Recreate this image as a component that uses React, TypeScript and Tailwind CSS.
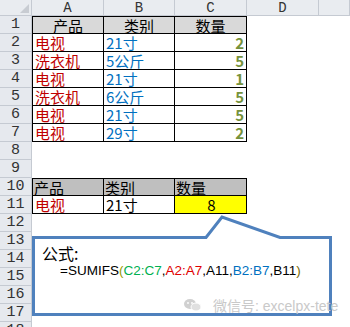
import React from "react";

type Cell = { t: string; cls?: string };

const cjk = "font-['Noto_Sans_CJK_SC',sans-serif]";
const red = "text-[#c00000]";
const blue = "text-[#0070c0]";
const green = "text-[#76923c] font-bold justify-end pr-[2px]";

const rows: Record<number, Cell[]> = {
  2: [{ t: "电视", cls: red }, { t: "21寸", cls: blue }, { t: "2", cls: green }],
  3: [{ t: "洗衣机", cls: red }, { t: "5公斤", cls: blue }, { t: "5", cls: green }],
  4: [{ t: "电视", cls: red }, { t: "21寸", cls: blue }, { t: "1", cls: green }],
  5: [{ t: "洗衣机", cls: red }, { t: "6公斤", cls: blue }, { t: "5", cls: green }],
  6: [{ t: "电视", cls: red }, { t: "21寸", cls: blue }, { t: "5", cls: green }],
  7: [{ t: "电视", cls: red }, { t: "29寸", cls: blue }, { t: "2", cls: green }],
  11: [
    { t: "电视", cls: red },
    { t: "21寸", cls: "text-black" },
    { t: "8", cls: "text-black bg-[#ffff00] justify-center" },
  ],
};

export default function App() {
  const cells: React.ReactNode[] = [];
  cells.push(
    <div key="corner" className="relative bg-[#e9ecf0] border-r border-b border-[#c5cad2]">
      <div className="absolute right-[2px] bottom-[2px] w-0 h-0 border-l-[9px] border-l-transparent border-b-[9px] border-b-[#c8ccd2]" />
    </div>
  );
  ["A", "B", "C", "D", ""].forEach((l, i) => {
    cells.push(
      <div
        key={"h" + i}
        className="bg-[#e9ecf0] border-r border-b border-[#c5cad2] flex items-center justify-center text-[14px] leading-none text-[#333] font-['Liberation_Mono',monospace]"
      >
        {l}
      </div>
    );
  });
  for (let r = 1; r <= 18; r++) {
    cells.push(
      <div
        key={"r" + r}
        className="bg-[#e6e9ee] border-r border-b border-[#c5cad2] flex items-center justify-center text-[15px] leading-none text-[#333] font-['Liberation_Mono',monospace]"
      >
        {r}
      </div>
    );
    for (let c = 0; c < 5; c++) {
      let content: React.ReactNode = null;
      let cls = "";
      const inT1 = r >= 1 && r <= 7 && c < 3;
      const inT2 = (r === 10 || r === 11) && c < 3;
      if (inT1 || inT2) {
        cls = "border-r border-b border-black";
        if (c === 0) cls += " border-l";
        if (r === 1 || r === 10) cls += " border-t";
      }
      if (r === 1 && c < 3) {
        content = ["产品", "类别", "数量"][c];
        cls += " bg-[#d9d9d9] justify-center text-black";
      } else if (r === 10 && c < 3) {
        content = ["产品", "类别", "数量"][c];
        cls += " bg-[#bfbfbf] text-black pl-[1px]";
      } else if (rows[r] && c < 3) {
        content = rows[r][c].t;
        cls += " pl-[2px] " + (rows[r][c].cls ?? "");
      }
      cells.push(
        <div
          key={r + "-" + c}
          className={`flex items-center text-[15px] leading-[15px] whitespace-nowrap ${cjk} ${cls}`}
        >
          {content}
        </div>
      );
    }
  }

  return (
    <div className="relative w-[350px] h-[327px] overflow-hidden bg-white">
      <div className="grid grid-cols-[32px_72px_71px_72px_72px_31px] grid-rows-[16px_repeat(18,18px)]">
        {cells}
      </div>

      {/* callout */}
      <svg className="absolute left-0 top-0" width="350" height="327" viewBox="0 0 350 327">
        <path
          d="M33.5 237.5 L206 237.5 L222 217 L280 237.5 L330.5 237.5 L330.5 314.5 L33.5 314.5 Z"
          fill="white"
          stroke="#4f81bd"
          strokeWidth="3"
          strokeLinejoin="miter"
        />
      </svg>
      <div className="absolute left-[42px] top-[243px] flex flex-col">
        <div className={`text-[16px] leading-[20px] text-black ${cjk}`}>公式:</div>
        <div className="ml-[18px] mt-[-1px] text-[13.5px] leading-[18px] font-['Liberation_Sans',sans-serif] whitespace-nowrap text-black">
          =SUMIFS<span className="text-[#9b9b00]">(</span>
          <span className="text-[#00b050]">C2:C7</span>,<span className="text-[#e00000]">A2:A7</span>,A11,
          <span className="text-[#0070c0]">B2:B7</span>,B11<span className="text-[#7a6a00]">)</span>
        </div>
      </div>

      {/* watermark */}
      <div className="absolute left-[183px] top-[298px] flex items-center gap-[10px] text-[#c9c9c9]">
        <svg width="20" height="15" viewBox="0 0 20 15">
          <ellipse cx="7" cy="6" rx="6" ry="5" fill="#d0d0d0" />
          <ellipse cx="13" cy="9" rx="5" ry="4" fill="#e0e0e0" stroke="white" strokeWidth="1" />
          <circle cx="5" cy="5" r="0.9" fill="white" />
          <circle cx="9" cy="5" r="0.9" fill="white" />
        </svg>
        <span className="text-[14px] leading-none whitespace-nowrap font-['Liberation_Sans','Noto_Sans_CJK_SC',sans-serif]">
          微信号: excelpx-tete
        </span>
      </div>
    </div>
  );
}
